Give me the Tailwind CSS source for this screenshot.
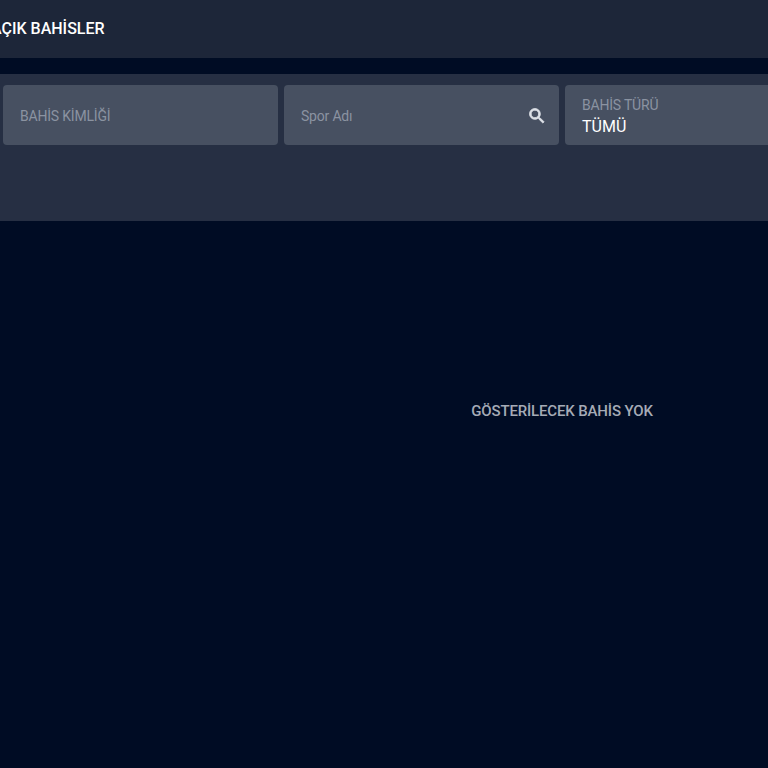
<!DOCTYPE html>
<html lang="tr">
<head>
    <meta charset="UTF-8">
    <title>Açık Bahisler</title>
    <script src="https://cdn.jsdelivr.net/npm/@tailwindcss/browser@4"></script>
</head>
<body class="bg-[#000c24] font-['Roboto',sans-serif] overflow-hidden h-[768px]">
    <div class="w-[1130px] ml-[-281px] h-[768px] flex flex-col">
        <!-- header -->
        <header class="h-[58px] bg-[#1d2639] flex items-center pl-[272px] shrink-0">
            <h1 class="text-[16px] font-medium text-white">AÇIK BAHİSLER</h1>
        </header>

        <!-- filters -->
        <section class="mt-[16px] h-[147px] bg-[#262f43] pt-[11px] shrink-0">
            <div class="flex gap-[6px] pl-[284px]">
                <div class="w-[275px] h-[60px] bg-[#475061] rounded-[4px] flex items-center px-[17px] pt-[3px]">
                    <span class="text-[14px] tracking-[-0.2px] text-[#8b93a1]">BAHİS KİMLİĞİ</span>
                </div>
                <div class="w-[275px] h-[60px] bg-[#475061] rounded-[4px] flex items-center justify-between pl-[17px] pr-[12px] pt-[1px]">
                    <span class="text-[14px] tracking-[-0.2px] pt-[2px] text-[#8b93a1]">Spor Adı</span>
                    <svg class="w-[20px] h-[20px] text-[#dde1e7]" viewBox="0 0 24 24" fill="currentColor" stroke="currentColor" stroke-width="1"><path d="M15.5 14h-.79l-.28-.27A6.47 6.47 0 0 0 16 9.5 6.5 6.5 0 1 0 9.5 16c1.61 0 3.09-.59 4.23-1.57l.27.28v.79l5 4.99L20.49 19l-4.99-5zm-6 0C7.01 14 5 11.99 5 9.5S7.01 5 9.5 5 14 7.01 14 9.5 11.99 14 9.5 14z"/></svg>
                </div>
                <div class="w-[275px] h-[60px] bg-[#475061] rounded-[4px] flex flex-col justify-center px-[17px] pt-[5px]">
                    <span class="text-[14px] leading-[18px] tracking-[-0.2px] text-[#8b93a1]">BAHİS TÜRÜ</span>
                    <span class="text-[16px] leading-[25px] text-white">TÜMÜ</span>
                </div>
            </div>
        </section>

        <!-- empty state -->
        <main class="flex-1 flex items-start justify-center pt-[179px] pl-[556px]">
            <p class="text-[15px] font-medium tracking-[-0.15px] text-[#a5abb6]">GÖSTERİLECEK BAHİS YOK</p>
        </main>
    </div>
</body>
</html>
